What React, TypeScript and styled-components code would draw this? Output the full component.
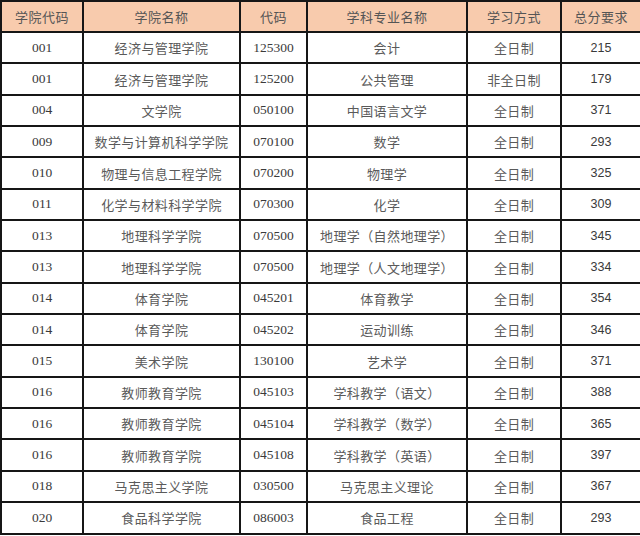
import React from "react";
import styled, { createGlobalStyle } from "styled-components";

const Global = createGlobalStyle`
  html, body { margin: 0; padding: 0; background: #ffffff; }
  #root { width: 640px; height: 536px; overflow: hidden; }
`;

const Table = styled.table`
  width: 640px;
  border-collapse: collapse;
  table-layout: fixed;
  font-family: "Liberation Serif", "Noto Sans CJK SC", serif;
  color: #4a4a4a;
`;

const HeadCell = styled.th`
  height: 29px;
  background: #f8cbad;
  border: 2px solid #161616;
  font-family: "Noto Sans CJK SC", sans-serif;
  font-weight: 400;
  font-size: 13px;
  color: #555555;
  text-align: center;
  padding: 0;
  letter-spacing: 0.5px;
`;

const Cell = styled.td<{ $kind?: "num" | "cjk" | "score" }>`
  height: 29.35px;
  border: 2px solid #161616;
  text-align: center;
  padding: 0;
  font-weight: 400;
  font-family: ${(p) =>
    p.$kind === "score"
      ? '"Liberation Sans", sans-serif'
      : p.$kind === "cjk"
      ? '"Noto Sans CJK SC", sans-serif'
      : '"Liberation Serif", serif'};
  font-size: ${(p) => (p.$kind === "score" ? "12.5px" : p.$kind === "cjk" ? "13px" : "13.5px")};
  color: ${(p) => (p.$kind === "cjk" ? "#5a5a5a" : "#3a3a3a")};
  letter-spacing: ${(p) => (p.$kind === "cjk" ? "0.4px" : "0")};
  white-space: nowrap;
`;

const rows: [string, string, string, string, string, string][] = [
  ["001", "经济与管理学院", "125300", "会计", "全日制", "215"],
  ["001", "经济与管理学院", "125200", "公共管理", "非全日制", "179"],
  ["004", "文学院", "050100", "中国语言文学", "全日制", "371"],
  ["009", "数学与计算机科学学院", "070100", "数学", "全日制", "293"],
  ["010", "物理与信息工程学院", "070200", "物理学", "全日制", "325"],
  ["011", "化学与材料科学学院", "070300", "化学", "全日制", "309"],
  ["013", "地理科学学院", "070500", "地理学（自然地理学）", "全日制", "345"],
  ["013", "地理科学学院", "070500", "地理学（人文地理学）", "全日制", "334"],
  ["014", "体育学院", "045201", "体育教学", "全日制", "354"],
  ["014", "体育学院", "045202", "运动训练", "全日制", "346"],
  ["015", "美术学院", "130100", "艺术学", "全日制", "371"],
  ["016", "教师教育学院", "045103", "学科教学（语文）", "全日制", "388"],
  ["016", "教师教育学院", "045104", "学科教学（数学）", "全日制", "365"],
  ["016", "教师教育学院", "045108", "学科教学（英语）", "全日制", "397"],
  ["018", "马克思主义学院", "030500", "马克思主义理论", "全日制", "367"],
  ["020", "食品科学学院", "086003", "食品工程", "全日制", "293"],
];

const widths = [82, 157, 67, 160, 94, 80];

export default function App() {
  return (
    <>
      <Global />
      <Table>
        <colgroup>
          {widths.map((w, i) => (
            <col key={i} style={{ width: w }} />
          ))}
        </colgroup>
        <thead>
          <tr>
            {["学院代码", "学院名称", "代码", "学科专业名称", "学习方式", "总分要求"].map((h) => (
              <HeadCell key={h}>{h}</HeadCell>
            ))}
          </tr>
        </thead>
        <tbody>
          {rows.map((r, i) => (
            <tr key={i}>
              <Cell $kind="num">{r[0]}</Cell>
              <Cell $kind="cjk">{r[1]}</Cell>
              <Cell $kind="num">{r[2]}</Cell>
              <Cell $kind="cjk">{r[3]}</Cell>
              <Cell $kind="cjk">{r[4]}</Cell>
              <Cell $kind="score">{r[5]}</Cell>
            </tr>
          ))}
        </tbody>
      </Table>
    </>
  );
}
